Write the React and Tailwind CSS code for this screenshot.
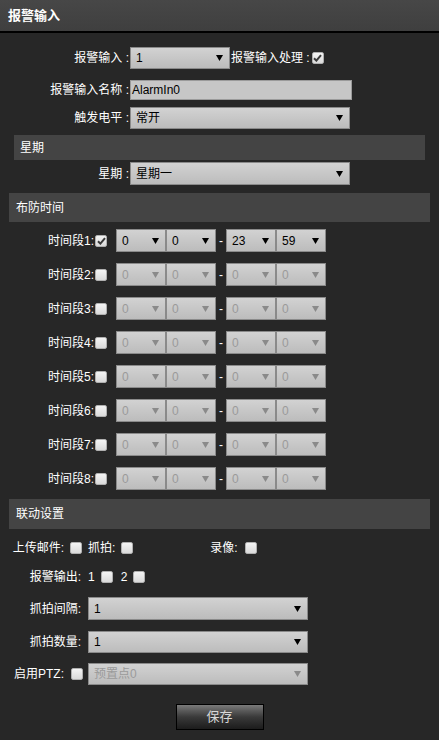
import React from "react";

const FONT = { fontFamily: '"Liberation Sans", "Noto Sans CJK SC", sans-serif' };

function Arrow({ disabled }) {
  return (
    <svg width="7" height="6" viewBox="0 0 7 6" className="shrink-0">
      <polygon points="0,0 7,0 3.5,6" fill={disabled ? "#8a8a8a" : "#000"} />
    </svg>
  );
}

function Select({ value, w, h = "h-[22px]", disabled }) {
  return (
    <div
      className={`${w} ${h} shrink-0 flex items-center justify-between border border-[#8a8a8a] bg-gradient-to-b from-[#d2d2d2] to-[#bcbcbc] pl-[5px] pr-[6px] text-[12px] ${disabled ? "text-[#9a9a9a]" : "text-black"}`}
    >
      <span className="leading-none">{value}</span>
      <Arrow disabled={disabled} />
    </div>
  );
}

function Check({ checked }) {
  return (
    <div className="w-[12px] h-[12px] shrink-0 rounded-[2px] border border-[#b0b0b0] bg-gradient-to-b from-[#f4f4f4] to-[#dadada] flex items-center justify-center">
      {checked && (
        <svg width="9" height="8" viewBox="0 0 9 8">
          <path d="M1 4.2 L3.4 6.6 L8 1.2" stroke="#3a3a3a" strokeWidth="2" fill="none" />
        </svg>
      )}
    </div>
  );
}

function Section({ title, className }) {
  return (
    <div className={`${className} bg-[#444444] flex items-center text-white text-[12px]`}>
      {title}
    </div>
  );
}

function TimeRow({ n, checked, first }) {
  const d = !checked;
  return (
    <div className={`${first ? "mt-[7px]" : "mt-[11px]"} h-[23px] flex items-center`}>
      <div className="w-[94px] text-right text-white text-[12px]">时间段{n}:</div>
      <div className="ml-[1px]">
        <Check checked={checked} />
      </div>
      <div className="ml-[9px] flex items-center">
        <Select w="w-[50px]" h="h-[23px]" value="0" disabled={d} />
        <Select w="w-[50px]" h="h-[23px]" value="0" disabled={d} />
        <span className="w-[10px] text-center text-white text-[12px]">-</span>
        <Select w="w-[50px]" h="h-[23px]" value={checked ? "23" : "0"} disabled={d} />
        <Select w="w-[50px]" h="h-[23px]" value={checked ? "59" : "0"} disabled={d} />
      </div>
    </div>
  );
}

export default function App() {
  return (
    <div style={FONT} className="w-[439px] h-[740px] bg-[#272727] overflow-hidden flex flex-col">
      <div className="h-[31px] shrink-0 bg-gradient-to-b from-[#474747] to-[#3f3f3f] border-b-2 border-black flex items-center pl-[8px] text-white text-[13px] font-bold box-content">
        报警输入
      </div>

      <div className="mt-[14px] h-[22px] flex items-center text-white text-[12px]">
        <div className="w-[129px] text-right">报警输入 :</div>
        <div className="ml-[1px]">
          <Select w="w-[100px]" value="1" />
        </div>
        <span className="ml-[1px]">报警输入处理 :</span>
        <div className="ml-[2px]">
          <Check checked />
        </div>
      </div>

      <div className="mt-[11px] h-[20px] flex items-center text-white text-[12px]">
        <div className="w-[129px] text-right">报警输入名称 :</div>
        <div className="ml-[1px] w-[222px] h-[20px] border border-[#9a9a9a] bg-[#c6c6c6] text-black flex items-center pl-[1px]">
          AlarmIn0
        </div>
      </div>

      <div className="mt-[7px] h-[22px] flex items-center text-white text-[12px]">
        <div className="w-[129px] text-right">触发电平 :</div>
        <div className="ml-[1px]">
          <Select w="w-[220px]" value="常开" />
        </div>
      </div>

      <Section title="星期" className="mt-[6px] mx-[14px] h-[25px] pl-[6px]" />

      <div className="mt-[2px] h-[23px] flex items-center text-white text-[12px]">
        <div className="w-[129px] text-right">星期 :</div>
        <div className="ml-[1px]">
          <Select w="w-[220px]" h="h-[23px]" value="星期一" />
        </div>
      </div>

      <Section title="布防时间" className="mt-[8px] ml-[9px] w-[421px] h-[29px] pl-[7px]" />

      <TimeRow n={1} checked first />
      {[2, 3, 4, 5, 6, 7, 8].map((n) => (
        <TimeRow key={n} n={n} />
      ))}

      <Section title="联动设置" className="mt-[9px] ml-[9px] w-[421px] h-[30px] pl-[7px]" />

      <div className="mt-[9px] h-[20px] flex items-center text-white text-[12px]">
        <div className="w-[82px] flex items-center justify-end gap-[6px]">
          <span>上传邮件:</span>
          <Check />
        </div>
        <div className="ml-[6px] flex items-center gap-[6px]">
          <span>抓拍:</span>
          <Check />
        </div>
        <div className="ml-[77px] flex items-center gap-[7px]">
          <span>录像:</span>
          <Check />
        </div>
      </div>

      <div className="mt-[9px] h-[20px] flex items-center text-white text-[12px]">
        <div className="w-[81px] text-right">报警输出:</div>
        <div className="ml-[7px] flex items-center">
          <span>1</span>
          <div className="ml-[6px]">
            <Check />
          </div>
          <span className="ml-[8px]">2</span>
          <div className="ml-[6px]">
            <Check />
          </div>
        </div>
      </div>

      <div className="mt-[10px] h-[23px] flex items-center text-white text-[12px]">
        <div className="w-[81px] text-right">抓拍间隔:</div>
        <div className="ml-[7px]">
          <Select w="w-[220px]" h="h-[23px]" value="1" />
        </div>
      </div>

      <div className="mt-[11px] h-[22px] flex items-center text-white text-[12px]">
        <div className="w-[81px] text-right">抓拍数量:</div>
        <div className="ml-[7px]">
          <Select w="w-[220px]" value="1" />
        </div>
      </div>

      <div className="mt-[10px] h-[22px] flex items-center text-white text-[12px]">
        <div className="w-[83px] flex items-center justify-end gap-[7px]">
          <span>启用PTZ:</span>
          <Check />
        </div>
        <div className="ml-[5px]">
          <Select w="w-[220px]" value="预置点0" disabled />
        </div>
      </div>

      <div className="mt-[19px] flex justify-center">
        <button className="w-[88px] h-[26px] border border-black bg-gradient-to-b from-[#7a7a7a] via-[#3a3a3a] to-[#1c1c1c] text-[#d8d8d8] text-[13px] flex items-center justify-center">
          保存
        </button>
      </div>
    </div>
  );
}
